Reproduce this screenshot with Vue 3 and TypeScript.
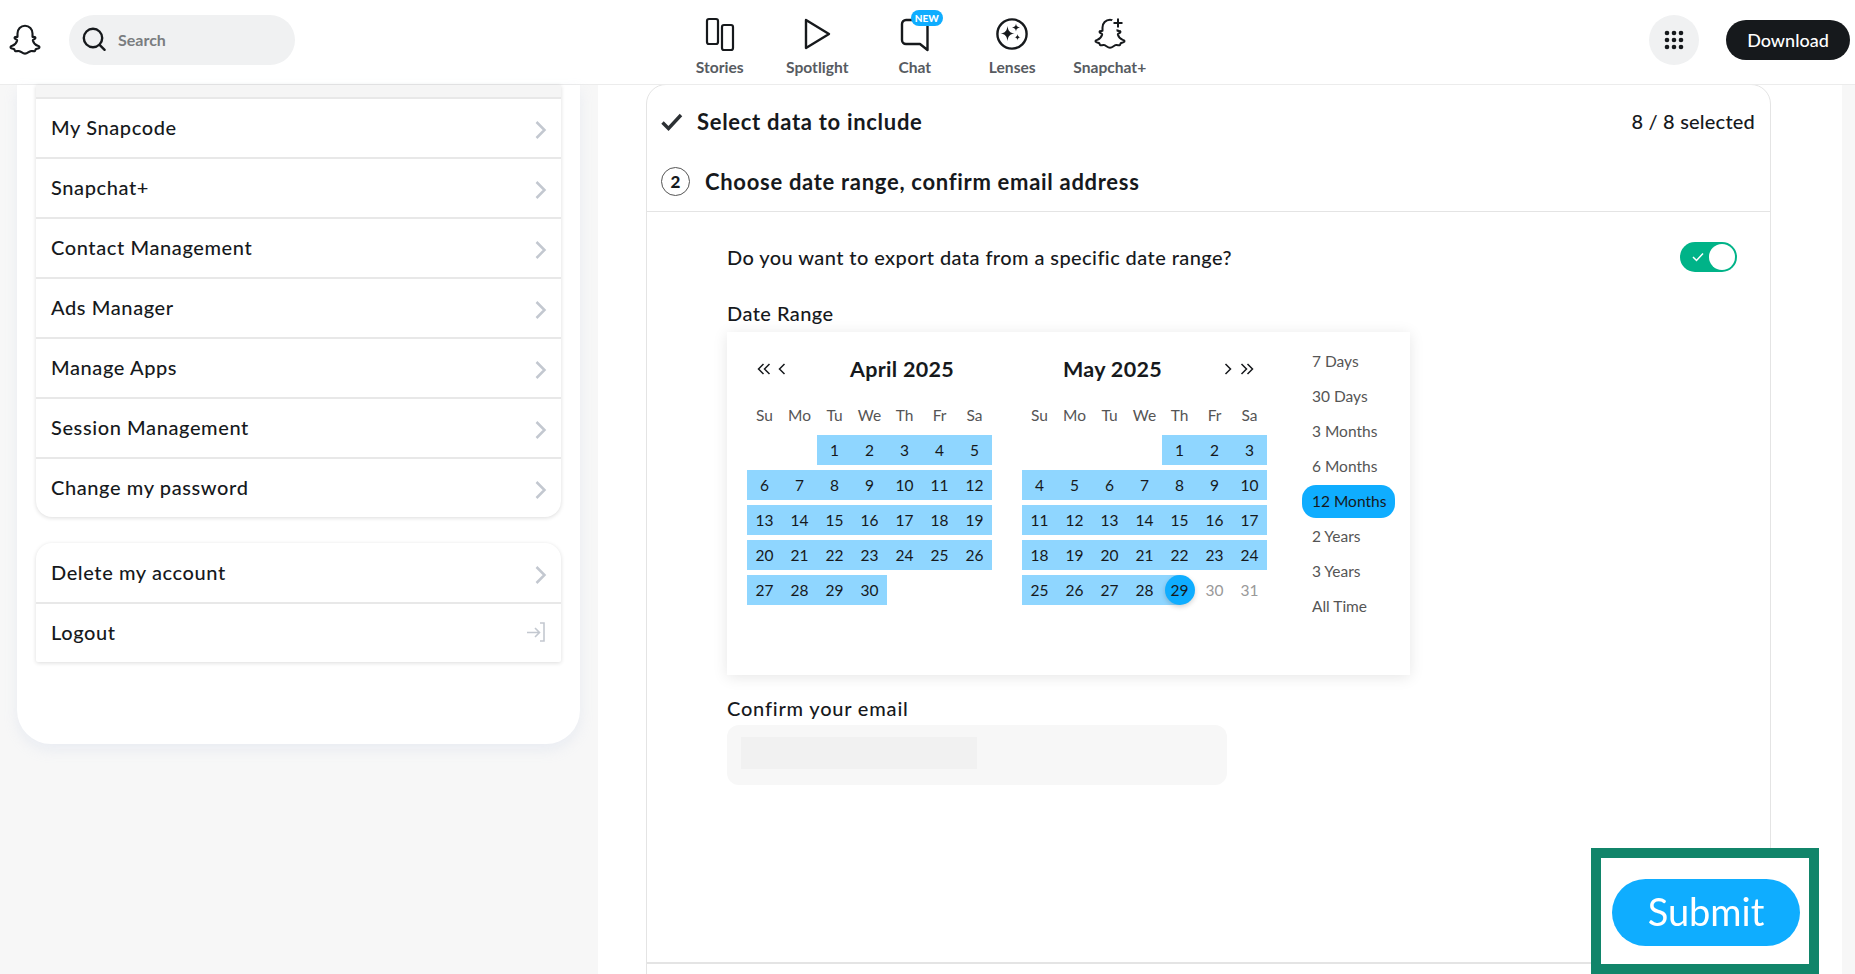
<script setup lang="ts">
const navItems = ['Stories', 'Spotlight', 'Chat', 'Lenses', 'Snapchat+']
const ghost =
  'M12 2.5c-2.9 0-5 2.2-5 5.2v2.2c-.6.1-1.3-.1-1.7.2-.5.4-.2 1 .3 1.2.5.2 1.3.5 1.2 1-.4 1.3-1.6 3-3.3 3.6-.8.3-1.5.6-1 1.3.4.6 1.6.6 2.3.9.4.3.2 1.1.6 1.3.6.3 1.7-.2 2.7 0 1.3.2 2.1 1.7 3.9 1.7s2.6-1.5 3.9-1.7c1-.2 2.1.3 2.7 0 .4-.2.2-1 .6-1.3.7-.3 1.9-.3 2.3-.9.5-.7-.2-1-1-1.3-1.7-.6-2.9-2.3-3.3-3.6-.1-.5.7-.8 1.2-1 .5-.2.8-.8.3-1.2-.4-.3-1.1-.1-1.7-.2V7.7c0-3-2.1-5.2-5-5.2z'

const accountRows = [
  'My Snapcode',
  'Snapchat+',
  'Contact Management',
  'Ads Manager',
  'Manage Apps',
  'Session Management',
  'Change my password',
]

const weekdays = ['Su', 'Mo', 'Tu', 'We', 'Th', 'Fr', 'Sa']
const ranges = ['7 Days', '30 Days', '3 Months', '6 Months', '12 Months', '2 Years', '3 Years', 'All Time']

const days = (total: number) => Array.from({ length: total }, (_, i) => i + 1)
const april = days(30)
const may = days(31)
</script>

<template>
  <div class="page">
    <header class="topbar">
      <svg class="logo" viewBox="0 0 24 24" fill="none" stroke="#16191c" stroke-width="1.4" stroke-linejoin="round">
        <path :d="ghost" />
      </svg>
      <div class="search">
        <svg width="26" height="26" viewBox="0 0 26 26" fill="none" stroke="#16191c" stroke-width="2.4" stroke-linecap="round">
          <circle cx="12" cy="12" r="9.2" />
          <path d="M18.6 18.8l5 5" />
        </svg>
        <span>Search</span>
      </div>

      <nav class="nav">
        <div v-for="item in navItems" :key="item" class="nav-item">
          <div class="nav-icon">
            <svg v-if="item === 'Stories'" width="40" height="40" viewBox="0 0 40 40" fill="none" stroke="#16191c" stroke-width="2.2">
              <rect x="7" y="1" width="11" height="25" rx="2" />
              <rect x="22" y="7" width="11" height="25" rx="2" />
            </svg>
            <svg v-else-if="item === 'Spotlight'" width="40" height="40" viewBox="0 0 40 40" fill="none" stroke="#16191c" stroke-width="2.4" stroke-linejoin="round">
              <path d="M9 2l23 14L9 30z" />
            </svg>
            <template v-else-if="item === 'Chat'">
              <svg width="40" height="40" viewBox="0 0 40 40" fill="none" stroke="#16191c" stroke-width="2.4" stroke-linejoin="round">
                <path d="M11 2h20a1.500 1.500 0 0 1 1.500 1.500V32l-7.500-6H11a4 4 0 0 1-4-4V6a4 4 0 0 1 4-4z" />
              </svg>
              <span class="badge">NEW</span>
            </template>
            <svg v-else-if="item === 'Lenses'" width="40" height="40" viewBox="0 0 40 40" fill="none">
              <circle cx="20" cy="16" r="14.600" stroke="#16191c" stroke-width="2.400" />
              <path d="M15.500 8c.7 5 2.300 6.800 7 7.500-4.700.7-6.300 2.500-7 7.500-.7-5-2.300-6.800-7-7.500 4.700-.7 6.300-2.500 7-7.500z" fill="#16191c" />
              <path d="M24 5.500c.4 2.700 1.200 3.600 4 4-2.800.4-3.600 1.300-4 4-.4-2.700-1.200-3.600-4-4 2.800-.4 3.600-1.300 4-4z" fill="#16191c" />
              <path d="M25.500 16c.3 2.200 1 2.900 3 3.200-2 .3-2.700 1-3 3.300-.3-2.300-1-3-3-3.300 2-.3 2.700-1 3-3.200z" fill="#16191c" />
            </svg>
            <svg v-else width="40" height="40" viewBox="0 0 40 40" fill="none" stroke="#16191c">
              <g transform="translate(2 -2) scale(1.500)">
                <path :d="ghost" stroke-width="1.350" stroke-linejoin="round" />
              </g>
              <circle cx="28" cy="5" r="6.500" fill="#fff" stroke="none" />
              <path d="M28 0.500v9M23.500 5h9" stroke-width="2" />
            </svg>
          </div>
          <span class="nav-label">{{ item }}</span>
        </div>
      </nav>

      <div class="top-actions">
        <button class="apps" aria-label="Apps">
          <svg width="20" height="20" viewBox="0 0 20 20" fill="#16191c">
            <template v-for="y in [3, 10, 17]" :key="y">
              <circle v-for="x in [3, 10, 17]" :key="x" :cx="x" :cy="y" r="2.300" />
            </template>
          </svg>
        </button>
        <button class="download">Download</button>
      </div>
    </header>

    <div class="content">
      <aside class="side">
        <div class="panel">
          <div class="list list-main">
            <div class="row-stub"></div>
            <div v-for="row in accountRows" :key="row" class="row">
              <span>{{ row }}</span>
              <svg class="chevron" width="14" height="20" viewBox="0 0 14 20" fill="none" stroke="#c3c8d0" stroke-width="2.500">
                <path d="M2.500 2l8 8-8 8" />
              </svg>
            </div>
          </div>
          <div class="list list-end">
            <div class="row">
              <span>Delete my account</span>
              <svg class="chevron" width="14" height="20" viewBox="0 0 14 20" fill="none" stroke="#c3c8d0" stroke-width="2.500">
                <path d="M2.500 2l8 8-8 8" />
              </svg>
            </div>
            <div class="row">
              <span>Logout</span>
              <svg class="logout-icon" width="20" height="20" viewBox="0 0 20 20" fill="none" stroke="#c3c8d0" stroke-width="1.600">
                <path d="M1 10.500h12M9 6l4.500 4.500L9 15M14 1h4v18h-4" />
              </svg>
            </div>
          </div>
        </div>
      </aside>

      <main class="main">
        <section class="card">
          <div class="step done">
            <svg width="22" height="18" viewBox="0 0 22 18" fill="none" stroke="#2c3034" stroke-width="3.400">
              <path d="M1.500 9.500l6 6L20 2" />
            </svg>
            <h2>Select data to include</h2>
            <span class="count">8 / 8 selected</span>
          </div>
          <div class="step current">
            <span class="step-no">2</span>
            <h2>Choose date range, confirm email address</h2>
          </div>
          <div class="step-body">
            <div class="question">
              <span>Do you want to export data from a specific date range?</span>
              <div class="toggle">
                <svg width="12" height="10" viewBox="0 0 12 10" fill="none" stroke="#fff" stroke-width="1.500">
                  <path d="M1 5l3.500 3.500L11 1.500" />
                </svg>
                <i class="knob"></i>
              </div>
            </div>

            <label class="field-label range-label">Date Range</label>
            <div class="picker">
              <div class="month">
                <div class="month-head">
                  <span class="arrows">
                    <svg width="14" height="14" viewBox="0 0 14 14" fill="none" stroke="#16191c" stroke-width="1.500"><path d="M6.500 2L1.500 7l5 5M12.500 2l-5 5 5 5" /></svg>
                    <svg width="8" height="14" viewBox="0 0 8 14" fill="none" stroke="#16191c" stroke-width="1.500"><path d="M6.500 2L1.500 7l5 5" /></svg>
                  </span>
                  <strong class="title-left">April 2025</strong>
                </div>
                <div class="grid">
                  <span v-for="d in weekdays" :key="d" class="dow">{{ d }}</span>
                  <span class="blank"></span>
                  <span class="blank"></span>
                  <span v-for="d in april" :key="d" class="day in-range">{{ d }}</span>
                </div>
              </div>

              <div class="month">
                <div class="month-head">
                  <strong class="title-right">May 2025</strong>
                  <span class="arrows arrows-right">
                    <svg width="8" height="14" viewBox="0 0 8 14" fill="none" stroke="#16191c" stroke-width="1.500"><path d="M1.500 2l5 5-5 5" /></svg>
                    <svg width="14" height="14" viewBox="0 0 14 14" fill="none" stroke="#16191c" stroke-width="1.500"><path d="M1.500 2l5 5-5 5M7.500 2l5 5-5 5" /></svg>
                  </span>
                </div>
                <div class="grid">
                  <span v-for="d in weekdays" :key="d" class="dow">{{ d }}</span>
                  <span v-for="n in 4" :key="n" class="blank"></span>
                  <span
                    v-for="d in may"
                    :key="d"
                    class="day"
                    :class="{ 'in-range': d < 29, 'range-end': d === 29, muted: d > 29 }"
                  >
                    <b v-if="d === 29" class="end-dot">{{ d }}</b>
                    <template v-else>{{ d }}</template>
                  </span>
                </div>
              </div>

              <ul class="ranges">
                <li v-for="r in ranges" :key="r" :class="{ active: r === '12 Months' }">{{ r }}</li>
              </ul>
            </div>

            <label class="field-label email-label">Confirm your email</label>
            <div class="email-box">
              <div class="email-mask"></div>
            </div>
          </div>
        </section>
      </main>
      <div class="edge"></div>
    </div>

    <div class="highlight">
      <div class="submit">Submit</div>
    </div>
  </div>
</template>

<style>
html,
body {
  margin: 0;
  overflow: hidden;
}
</style>

<style scoped>
.page {
  position: relative;
  width: 1855px;
  height: 974px;
  overflow: hidden;
  background: #fff;
  color: #16191c;
  font-family: Lato, 'Noto Sans', sans-serif;
}

.topbar {
  display: flex;
  align-items: center;
  height: 80px;
  border-bottom: 1px solid #ececec;
  padding: 0 5px 4px 8px;
  background: #fff;
}
.logo {
  width: 36px;
  height: 36px;
  flex: none;
  margin-top: -1px;
  margin-left: -1px;
}
.search {
  display: flex;
  align-items: center;
  gap: 11px;
  width: 226px;
  height: 50px;
  margin-left: 26px;
  padding: 0 0 2px 12px;
  box-sizing: border-box;
  border-radius: 25px;
  background: #f0f1f2;
  color: #7a7d80;
  font-size: 16px;
  font-weight: 700;
}
.nav {
  display: flex;
  align-self: flex-start;
  margin-left: 376px;
}
.nav-item {
  display: flex;
  flex-direction: column;
  align-items: center;
  width: 97.500px;
}
.nav-icon {
  position: relative;
  width: 40px;
  height: 40px;
  margin-top: 17.500px;
}
.nav-icon svg {
  display: block;
  overflow: visible;
}
.badge {
  position: absolute;
  left: 16px;
  top: -8px;
  width: 32px;
  height: 16px;
  border-radius: 8px;
  background: #0fadff;
  color: #fff;
  font-size: 10px;
  font-weight: 900;
  line-height: 16px;
  text-align: center;
}
.nav-label {
  color: #575b61;
  font-size: 15.600px;
  font-weight: 700;
  line-height: 18px;
  white-space: nowrap;
}
.top-actions {
  display: flex;
  align-items: center;
  gap: 27px;
  margin-left: auto;
}
.apps {
  display: flex;
  align-items: center;
  justify-content: center;
  width: 50px;
  height: 50px;
  border: 0;
  border-radius: 50%;
  background: #f0f1f2;
}
.download {
  width: 124px;
  height: 40px;
  border: 0;
  border-radius: 20px;
  background: #16191c;
  color: #fff;
  font-family: inherit;
  font-size: 18px;
  font-weight: 500;
}

.content {
  display: flex;
  height: 889px;
}
.side {
  width: 598px;
  flex: none;
  padding-left: 17px;
  box-sizing: border-box;
  background: #f7f7f7;
}
.panel {
  display: flex;
  flex-direction: column;
  gap: 26px;
  width: 563px;
  height: 659px;
  padding: 0 19px;
  box-sizing: border-box;
  border-radius: 0 0 34px 34px;
  background: #fff;
  box-shadow: 0 6px 14px rgba(180, 195, 225, 0.2);
}
.list {
  background: #fff;
  box-shadow: 0 1px 4px rgba(0, 0, 0, 0.14);
}
.list-main {
  height: 432px;
  overflow: hidden;
  border-radius: 0 0 16px 16px;
}
.list-end {
  border-radius: 16px 16px 2px 2px;
  overflow: hidden;
}
.row-stub {
  height: 12px;
  background: #f5f5f5;
}
.row {
  display: flex;
  align-items: center;
  justify-content: space-between;
  height: 60px;
  padding: 0 15px 2px 15px;
  box-sizing: border-box;
  border-top: 2px solid #e8e8e8;
  font-size: 20px;
  font-weight: 500;
  letter-spacing: 0.6px;
}
.list-end .row:first-child {
  height: 59px;
  border-top: 0;
}
.chevron {
  margin-top: 6px;
  margin-right: -2px;
}
.logout-icon {
  margin-top: -1px;
}

.main {
  flex: 1;
  padding-left: 48px;
  overflow: hidden;
}
.edge {
  width: 13px;
  flex: none;
  background: #f7f7f7;
}
.card {
  width: 1125px;
  height: 900px;
  margin-top: -1px;
  box-sizing: border-box;
  border: 1px solid #e4e4e4;
  border-radius: 20px 20px 0 0;
}
.step {
  display: flex;
  align-items: center;
  box-sizing: border-box;
}
.step h2 {
  margin: 0;
  font-size: 22px;
  font-weight: 700;
  letter-spacing: 0.7px;
}
.done {
  height: 73px;
  padding: 0 15px 0 14px;
  gap: 14px;
}
.count {
  margin-left: auto;
  margin-top: -2px;
  font-size: 20px;
  font-weight: 500;
  letter-spacing: 0.2px;
}
.current {
  height: 54px;
  padding: 0 0 7px 14px;
  gap: 15px;
  border-bottom: 1px solid #e4e4e4;
}
.step-no {
  width: 27px;
  height: 27px;
  border: 1px solid #555;
  border-radius: 50%;
  font-size: 17px;
  font-weight: 900;
  line-height: 27px;
  text-align: center;
}
.step-body {
  display: flex;
  flex-direction: column;
  height: 752px;
  padding: 0 33px 0 80px;
  box-sizing: border-box;
  border-bottom: 2px solid #e4e4e4;
}
.question {
  display: flex;
  align-items: center;
  justify-content: space-between;
  margin-top: 30px;
  height: 30px;
  font-size: 20px;
  font-weight: 500;
  letter-spacing: 0.42px;
}
.toggle {
  position: relative;
  display: flex;
  align-items: center;
  width: 57px;
  height: 30px;
  padding-left: 12px;
  box-sizing: border-box;
  border-radius: 15px;
  background: #00b388;
}
.knob {
  position: absolute;
  right: 2px;
  top: 2px;
  width: 26px;
  height: 26px;
  border-radius: 50%;
  background: #fff;
}
.field-label {
  display: block;
  font-size: 20px;
  font-weight: 500;
  line-height: 24px;
  letter-spacing: 0.45px;
}
.range-label {
  margin-top: 29px;
}
.picker {
  display: flex;
  flex: none;
  width: 683px;
  height: 343px;
  margin-top: 7px;
  padding-left: 20px;
  box-sizing: border-box;
  background: #fff;
  box-shadow: 0 2px 14px rgba(0, 0, 0, 0.1);
}
.month {
  width: 245px;
  margin-right: 30px;
  padding-top: 17px;
}
.month-head {
  display: flex;
  align-items: center;
  height: 39px;
  padding-bottom: 1px;
  margin-bottom: 11px;
}
.month-head strong {
  font-size: 21.500px;
  font-weight: 700;
  letter-spacing: 0.3px;
}
.arrows {
  display: flex;
  align-items: center;
  gap: 7px;
  margin-left: 10px;
}
.arrows-right {
  margin-left: auto;
  margin-right: 13px;
  gap: 8px;
}
.title-left {
  margin-left: 64px;
}
.title-right {
  margin-left: 41px;
}
.grid {
  display: grid;
  grid-template-columns: repeat(7, 35px);
  grid-auto-rows: 30px;
  row-gap: 5px;
  font-size: 15.500px;
  text-align: center;
}
.dow {
  color: #555;
  line-height: 30px;
}
.day {
  line-height: 30px;
}
.in-range {
  background: #8fd6ff;
}
.range-end {
  position: relative;
  background: linear-gradient(to right, #8fd6ff 50%, transparent 50%);
}
.end-dot {
  display: block;
  width: 30px;
  margin-left: 2.500px;
  border-radius: 50%;
  background: #0fadff;
  box-shadow: 0 2px 5px rgba(0, 0, 0, 0.18);
  font-weight: 400;
}
.muted {
  color: #999;
}
.ranges {
  flex: 1;
  margin: 0;
  margin-left: 5px;
  padding: 13px 0 0;
  list-style: none;
  font-size: 15.500px;
  color: #555;
}
.ranges li {
  width: 93px;
  height: 33px;
  margin-bottom: 2px;
  padding-left: 10px;
  box-sizing: border-box;
  border-radius: 14px;
  line-height: 33px;
  white-space: nowrap;
}
.ranges .active {
  background: #0fadff;
  color: #16191c;
}
.email-label {
  margin-top: 21px;
  letter-spacing: 0.8px;
}
.email-box {
  flex: none;
  width: 500px;
  height: 60px;
  margin-top: 5px;
  padding: 12px 14px;
  box-sizing: border-box;
  border-radius: 12px;
  background: #f7f7f7;
}
.email-mask {
  width: 236px;
  height: 32px;
  background: #f1f1f1;
}

.highlight {
  position: absolute;
  left: 1591px;
  top: 848px;
  display: flex;
  align-items: center;
  justify-content: center;
  width: 228px;
  height: 126px;
  box-sizing: border-box;
  border: 10px solid #11856a;
  background: #fff;
}
.submit {
  width: 188px;
  height: 67px;
  margin: 3px 0 0 2px;
  border-radius: 34px;
  background: #0fadff;
  color: #fff;
  filter: blur(0.6px);
  font-size: 38px;
  font-weight: 400;
  line-height: 64px;
  text-align: center;
}
</style>
